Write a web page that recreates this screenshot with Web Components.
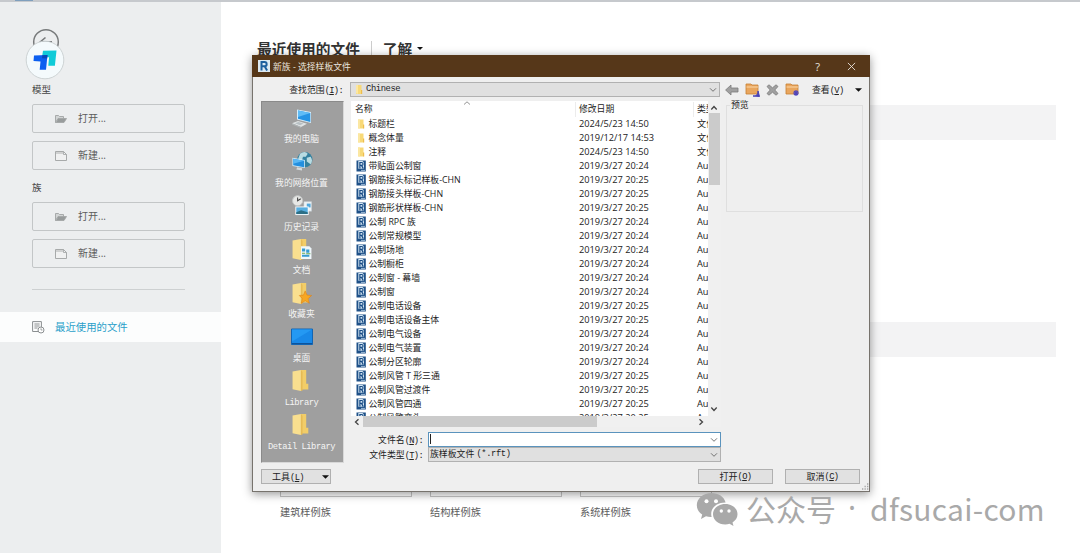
<!DOCTYPE html>
<html lang="zh-CN">
<head>
<meta charset="utf-8">
<title>新族 - 选择样板文件</title>
<style>
  html, body {
    margin: 0;
    height: 553px;
    overflow: hidden;
    background: #fff;
  }

  body {
    font-family: "Open Sans", "Noto Sans CJK SC", sans-serif;
    color: #333;
  }
</style>
</head>
<body>
<revit-home></revit-home>

<script>
const define = (name, html, setup) => {
  const template = document.createElement('template');
  // whitespace between tags would show up under an inherited white-space: pre
  template.innerHTML = html.trim().replace(/>\s+</g, '><');

  window.customElements.define(name, class extends HTMLElement {
    constructor() {
      super();

      const shadowRoot = this.attachShadow({ mode: 'open' });
      shadowRoot.appendChild(template.content.cloneNode(true));
    }

    connectedCallback() {
      if (setup) {
        setup.call(this, this.shadowRoot);
      }
    }
  });
};

const FOLDER = `
  <path d="M1 1.5 9 0v20l-8-1.6z" fill="#f9df8f"/>
  <path d="M9 0h5v13h2v5.5H9z" fill="#f2cd68"/>
  <path d="M9 0 10.5 2v17.500l-1.500 .5z" fill="#e6bb55"/>`;

const ICONS = {
  // sidebar
  open: ['0 0 12 10', `<path d="M.5 8.5v-7h3l1 1h4v2M.5 8.5l2.5-4h8.5L9 8.5z" fill="#d2d5d5" stroke="#a0a4a4" stroke-width=".9"/><path d="M3 5h8L9 8H1.5z" fill="#989c9c"/>`],
  new: ['0 0 12 10', `<path d="M.5.5h8l3 3v6H.5z" fill="#f0f1f1" stroke="#9ea2a2" stroke-width=".9"/><path d="M8.5.5v3h3M1 2h7" fill="none" stroke="#9ea2a2" stroke-width=".8"/>`],
  recent: ['0 0 13 13', `<path d="M8 10.5H.6V.6h8.8v6M2.4 3h5.2M2.4 5h5.2M2.4 7h3.2" fill="none" stroke="#8b8f91"/><circle cx="9" cy="9" r="3" fill="#fff" stroke="#8b8f91"/><path d="M9 7.3V9h1.5" fill="none" stroke="#8b8f91" stroke-width=".8"/>`],

  // places bar
  computer: ['0 0 22 20', `<path d="m6 1 14 2.5v11L6 11z" fill="#d7eefb"/><path d="m7 2 12.3 2.4v9.2L7 10.3z" fill="#2594e5"/><path d="m7 2 12.3 2.4L7 8.5z" fill="#5fbcf6"/><path d="m1 14.8 6-2.3 9 2.7-6 3.3z" fill="#dfe3e4"/><path d="m1 14.8 9 3.7v1L1 16z" fill="#aeb4b6"/><path d="m4 14.8 3.5-1.3 5 1.6-3.4 1.7z" fill="#b7bfc3"/>`],
  network: ['0 0 22 22', `<circle cx="14" cy="9" r="8" fill="#34819f"/><path d="M9 3q5-4 8 0l-2 3-3 0-1 4-4-2zM16 7l4-1q3 4 0 8l-4-3z" fill="#b9dce2"/><path d="m1 7 13 2.3v8.6L1 15.6z" fill="#d7eefb"/><path d="m1.8 8 11.4 2.1v6.8L1.8 14.8z" fill="#238fdf"/><path d="m1.8 8 11.4 2.1-11.4 3.3z" fill="#5ab8f4"/><path d="m6 17 5 1v2.5l-6-1z" fill="#d5dadc"/>`],
  history: ['0 0 22 22', `<path d="M13 7h8v10h-8z" fill="#eef3f5" stroke="#c5d1d7" stroke-width=".5"/><path d="M16 9h4v4h-4z" fill="#52a8dc"/><circle cx="6.4" cy="6" r="5.3" fill="#e7e8e6" stroke="#c2c5c5"/><path d="M6.4 2.6V6l3.300-2" fill="none" stroke="#444" stroke-width="1.1"/><path d="M4 12h14v9H4z" fill="#f6fafb"/><path d="M5 13h12v7H5z" fill="#57aee0"/><path d="m5 18 5-2 7 2v2H5z" fill="#2c6f86"/>`],
  docs: ['0 0 20 20', `${FOLDER}<path d="M9 7h8l2 2v10H9z" fill="#eff7fb"/><path d="M10 9h3v3h-3zM14 10h3v3h-3zM10 15h7v2h-7z" fill="#379bd0"/><path d="M14 14h4M10 13.5h3" stroke="#67a956"/>`],
  favorites: ['0 0 20 20', `${FOLDER}<path d="m13 7.5 1.8 4 4.4.4-3.4 3 1.2 4.4-3.900-2.400-3.900 2.400 1.200-4.400-3-3 4-.4z" fill="#f6a724" stroke="#de7c12" stroke-width=".5"/>`],
  desktop: ['0 0 22 17', `<path d="M.5.5h21v15.500H.5z" fill="#1989e8" stroke="#1265b3"/><path d="M1 1h20L1 13z" fill="#2499f3"/><path d="M1 15h20" stroke="#0d539b"/>`],
  folder: ['0 0 20 20', FOLDER],

  // toolbar above the list
  back: ['0 0 14 12', `<path d="M.6 6 6 1v3h7v4H6v3z" fill="#a0a0a0" stroke="#7c7c7c" stroke-width=".8"/>`],
  up: ['0 0 15 14', `<path d="M1 1h5l1 1h6v9H1z" fill="#e9a65e" stroke="#c78034" stroke-width=".8"/><path d="M1.500 4H13" stroke="#fbd7a6"/><path d="M8 13c4 0 5-2 5-5l1.500 5.500z" fill="#4742b5" stroke="#4742b5"/>`],
  remove: ['0 0 13 12', `<path d="M1 2.500 3 .8l3.500 3L10 .8l2 1.700L8.800 6l3.200 3.500-2 1.700-3.500-3-3.500 3-2-1.700L4.200 6z" fill="#a0a0a0" stroke="#7d7d7d" stroke-width=".8"/>`],
  create: ['0 0 15 14', `<path d="M1 1h5l1 1h6v9H1z" fill="#e9a65e" stroke="#c78034" stroke-width=".8"/><path d="M1.500 4H13" stroke="#fbd7a6"/><path d="M11 7v6M8 10h6M9 8l4 4M13 8l-4 4" stroke="#5045bb" stroke-width="1.2"/>`],

  // rows
  smallfolder: ['0 0 10 11', `<path d="M2 1h5.500v9H2z" fill="#f8d977"/><path d="M2 1h2v9L2 9.300z" fill="#fbe7a2"/><path d="M7 6h1.200v4H7z" fill="#eebd4e"/>`],
  family: ['0 0 11 12', `<path d="M.5.5h9.300v11H.5z" fill="#1f5188"/><path d="M2.300 1h4.200L8 2.600V8.800H2.300z" fill="#d3e5f2"/><path d="M3.900 8.600V2.500h1.700a1.400 1.400 0 0 1 0 2.900H4.200M5.500 5.400l1.800 3.200" fill="none" stroke="#174b85" stroke-width="1.200"/><path d="M5 10.400H9" stroke="#bdd7eb" stroke-width=".8"/>`],
  revit: ['0 0 12 12', `<path d="M0 0h12v12H0z" fill="#dce9f2"/><path d="M3.500 10.500V2h3a2 2 0 0 1 0 4.300h-3M6.500 6l2.600 4.500" fill="none" stroke="#1d5f9e" stroke-width="2"/>`],

  // arrows
  chevdown: ['0 0 8 6', `<path d="m1 1.300 3 3 3-3" fill="none" stroke="#666" stroke-width=".9"/>`],
  scrollup: ['0 0 8 6', `<path d="m1.300 4.500 2.700-3 2.700 3" fill="none" stroke="#444" stroke-width="1.300"/>`],
  scrolldown: ['0 0 8 6', `<path d="m1.300 1.500 2.700 3 2.700-3" fill="none" stroke="#444" stroke-width="1.300"/>`],
  scrollleft: ['0 0 6 8', `<path d="m4.500 1.300-3 2.700 3 2.700" fill="none" stroke="#444" stroke-width="1.300"/>`],
  scrollright: ['0 0 6 8', `<path d="m1.500 1.300 3 2.700-3 2.700" fill="none" stroke="#444" stroke-width="1.300"/>`],
  sort: ['0 0 8 4', `<path d="m1 3.500 3-2.700 3 2.700" fill="none" stroke="#777" stroke-width=".8"/>`],
  triangle: ['0 0 8 4', `<path d="M0 0h8L4 4z" fill="#111"/>`],
  close: ['0 0 10 10', `<path d="m1 1 8 8M9 1 1 9" stroke="#e9e3dd" stroke-width="1"/>`],
  grip: ['0 0 8 8', `<path d="M6 1h1.300M3.500 3.500h1.300M6 3.500h1.300M1 6h1.300M3.500 6h1.300M6 6h1.300" stroke="#a5a5a5" stroke-width="1.300"/>`],
  goback: ['0 0 28 28', `<circle cx="14" cy="14" r="12.300" fill="none" stroke="#777a7b" stroke-width="1.500"/><path d="m13.500 9.500-5 4.200 5 4.200M9 13.700h11" fill="none" stroke="#777a7b" stroke-width="1.600"/>`],
  badge: ['0 0 40 40', `<circle cx="20" cy="20" r="18.800" fill="#f4fafc" stroke="#c4cacc" stroke-width=".8"/><path d="m18 10.800 13.500-.4-1.600 15.400h-6.600l.8-8.600H17z" fill="#10cbd8"/><path d="m9 15.500 13.500-.4L21 29.800h-6.300l.8-8.400-7-.3z" fill="#0b5ff0"/><path d="m17.300 15.200 5.200-.1-.4 3.400-5-.2z" fill="#0749b7"/>`],
  wechat: ['0 0 42 34', `<path d="M15.500 1C7.200 1 .8 6.500 .8 13.200c0 3.900 2.100 7.200 5.400 9.400L5 27l5-2.700c1.800.5 3.500.8 5.600.7-2.100-8.200 4.500-14.700 14-14.500C28.200 4.800 22.400 1 15.500 1z" fill="#a9a9a9"/><path d="M29.300 12c-7 0-12.300 4.600-12.300 10.200S22.300 32.400 29.300 32.400c1.500 0 2.900-.2 4.200-.6l4 2.100-1-3.500c3-1.900 5-4.800 5-8.200C41.500 16.600 36.300 12 29.300 12z" fill="#a9a9a9"/><g fill="#fff"><circle cx="10.500" cy="9.300" r="2"/><circle cx="20" cy="9.300" r="2"/><circle cx="25.300" cy="19" r="1.700"/><circle cx="33" cy="19" r="1.700"/></g>`],
};

define('ui-icon', `
  <style>
    :host {
      display: block;
      flex: none;
    }

    svg {
      display: block;
      width: 100%;
      height: 100%;
    }
  </style>
`, function (root) {
  const [box, body] = ICONS[this.getAttribute('name')];
  root.innerHTML += `<svg viewBox="${box}">${body}</svg>`;
  this.style.width = `${this.getAttribute('w')}px`;
  this.style.height = `${this.getAttribute('h')}px`;
});

// half-width run used by the classic dialog font
define('mono-run', `
  <style>
    :host {
      font-family: "Liberation Mono", monospace;
      font-size: 8.800px;
      letter-spacing: var(--mono-spacing, -.7px);
    }
  </style>
  <slot></slot>
`);

define('side-button', `
  <style>
    :host {
      box-sizing: border-box;
      display: flex;
      align-items: center;
      gap: 11px;
      height: 29px;
      padding-left: 22px;
      border: 1px solid #c3c6c7;
      border-radius: 2px;
      font-size: 10px;
      color: #5c5c5c;
    }

    span {
      margin-top: -2px;
    }
  </style>
  <slot name="icon"></slot>
  <span><slot></slot></span>
`);

define('start-sidebar', `
  <style>
    :host {
      display: block;
      width: 221px;
      height: 100%;
      background: #eceeef;
    }

    .logo {
      height: 80px;
      box-sizing: border-box;
      padding: 26px 0 0 32px;
    }

    .badge {
      margin: -16px 0 0 -7px;
    }

    .group {
      padding: 0 36px 0 32px;
      display: flex;
      flex-direction: column;
      gap: 8px;
    }

    .label {
      height: 16px;
      margin-bottom: -2px;
      line-height: 15px;
      font-size: 9.500px;
      color: #444;
    }

    .second {
      margin-top: 10px;
    }

    hr {
      width: 153px;
      margin: 21px 0 22px 32px;
      border: 0;
      border-top: 1px solid #cdd0d1;
    }

    .recent {
      display: flex;
      align-items: center;
      gap: 10px;
      height: 30px;
      padding-left: 32px;
      background: #fcfdfd;
      font-size: 10.400px;
      color: #2a9fc9;
    }

    .recent span {
      margin-top: -1px;
    }
  </style>
  <div class="logo">
    <ui-icon name="goback" w="28" h="28"></ui-icon>
    <div class="badge"><ui-icon name="badge" w="40" h="40"></ui-icon></div>
  </div>
  <div class="group">
    <div class="label">模型</div>
    <side-button><ui-icon slot="icon" name="open" w="12" h="10"></ui-icon>打开...</side-button>
    <side-button><ui-icon slot="icon" name="new" w="12" h="10"></ui-icon>新建...</side-button>
  </div>
  <div class="group second">
    <div class="label">族</div>
    <side-button><ui-icon slot="icon" name="open" w="12" h="10"></ui-icon>打开...</side-button>
    <side-button><ui-icon slot="icon" name="new" w="12" h="10"></ui-icon>新建...</side-button>
  </div>
  <hr>
  <div class="recent"><ui-icon name="recent" w="13" h="13"></ui-icon><span>最近使用的文件</span></div>
`);

define('recent-page', `
  <style>
    :host {
      display: flex;
      flex-direction: column;
      flex: 1;
      height: 100%;
      padding: 0 24px 0 36px;
      box-sizing: border-box;
    }

    header {
      display: flex;
      align-items: center;
      height: 27px;
      margin-top: 33px;
      font-size: 14.700px;
      font-weight: bold;
      color: #333;
    }

    .learn {
      display: flex;
      align-items: center;
      gap: 5px;
      margin-left: 12px;
      padding-left: 11px;
    }

    .learn::before {
      content: "";
      width: 1px;
      height: 15px;
      margin-left: -12px;
      margin-right: 6px;
      background: #ccc;
    }

    .band {
      height: 35px;
      background: #f3f3f4;
    }

    .first {
      margin-top: 43px;
    }

    .next {
      margin-top: 182px;
    }

    .tiles {
      display: flex;
      gap: 18px;
      margin: 26px 0 0 23px;
      font-size: 10.200px;
      color: #5c5c5c;
    }

    .tile {
      width: 132px;
    }

    .thumb {
      height: 114px;
      box-sizing: border-box;
      border: 1px solid #c6c6c6;
      margin-bottom: 7px;
    }
  </style>
  <header>
    <span>最近使用的文件</span>
    <span class="learn">了解 <ui-icon name="triangle" w="6" h="3"></ui-icon></span>
  </header>
  <div class="band first"></div>
  <div class="band next"></div>
  <div class="tiles">
    <div class="tile"><div class="thumb"></div>建筑样例族</div>
    <div class="tile"><div class="thumb"></div>结构样例族</div>
    <div class="tile"><div class="thumb"></div>系统样例族</div>
  </div>
`);

define('combo-box', `
  <style>
    :host {
      box-sizing: border-box;
      display: flex;
      align-items: center;
      justify-content: space-between;
      height: 15px;
      padding: 0 2px 0 3px;
      border: 1px solid #b1b1b1;
      background: #e0e0e0;
      font-size: 8.900px;
      color: #222;
    }

    :host([editable]) {
      border-color: #5a93bd;
      background: #fff;
    }

    span {
      display: flex;
      align-items: center;
      gap: 2px;
      margin-top: -1px;
      white-space: nowrap;
      line-height: 12px;
    }
  </style>
  <span><slot></slot></span>
  <ui-icon name="chevdown" w="8" h="6"></ui-icon>
`);

define('push-button', `
  <style>
    :host {
      box-sizing: border-box;
      display: flex;
      align-items: center;
      justify-content: center;
      width: 75px;
      height: 15px;
      border: 1px solid #b0b0b0;
      background: #e1e1e1;
      font-size: 9px;
      color: #222;
      white-space: nowrap;
    }
  </style>
  <slot></slot>
`);

define('place-item', `
  <style>
    :host {
      --mono-spacing: -.48px;
      display: flex;
      flex-direction: column;
      align-items: center;
      height: 43.800px;
      font-size: 8.800px;
      color: #f4f4f4;
    }

    .pic {
      display: flex;
      align-items: center;
      height: 24px;
    }

    .name {
      height: 18px;
      margin-left: -1px;
      line-height: 19px;
      white-space: nowrap;
    }
  </style>
  <div class="pic"></div>
  <div class="name"><slot></slot></div>
`, function (root) {
  const icon = this.getAttribute('icon');
  const height = icon === 'desktop' ? 18 : 21;
  root.querySelector('.pic').innerHTML = `<ui-icon name="${icon}" w="22" h="${height}"></ui-icon>`;
});

define('file-list', `
  <style>
    :host {
      display: grid;
      grid-template-columns: 357px 12px;
      grid-template-rows: 315px 11px;
      height: 326px;
      background: #f0f0f0;
      font-size: 9.250px;
      color: #222;
    }

    .view {
      overflow: hidden;
      background: #fff;
    }

    .row, .head {
      display: grid;
      grid-template-columns: 13.400px 210.600px 118px 80px;
      align-items: center;
      width: 422px;
      height: 14px;
      padding-left: 4px;
      line-height: 14px;
      white-space: nowrap;
    }

    .row ui-icon {
      margin-left: 1px;
    }

    .row > :nth-child(2) {
      font-size: 8.850px;
    }

    .head {
      grid-template-columns: 108px 112px 118px 80px;
      height: 16px;
      font-size: 8.800px;
    }

    .head ui-icon {
      align-self: start;
    }

    .date, .type {
      height: 15px;
      padding-left: 3px;
      border-left: 1px solid #ececec;
      line-height: 15px;
    }

    .vbar {
      display: flex;
      flex-direction: column;
      justify-content: space-between;
      align-items: center;
      padding: 4px 0;
      box-sizing: border-box;
    }

    .vbar i {
      width: 11px;
      height: 72px;
      margin: 2px 0 auto;
      background: #cbcbcb;
    }

    .hbar {
      display: flex;
      align-items: center;
      padding: 0 4px 0 3px;
    }

    .hbar i {
      width: 234px;
      height: 11px;
      margin: 0 auto 0 3px;
      background: #cbcbcb;
    }
  </style>
  <div class="view">
    <div class="head"><span>名称</span><ui-icon name="sort" w="8" h="4"></ui-icon><span class="date">修改日期</span><span class="type">类型</span></div>
    <div class="rows"></div>
  </div>
  <div class="vbar">
    <ui-icon name="scrollup" w="8" h="6"></ui-icon><i></i><ui-icon name="scrolldown" w="8" h="6"></ui-icon>
  </div>
  <div class="hbar">
    <ui-icon name="scrollleft" w="6" h="8"></ui-icon><i></i><ui-icon name="scrollright" w="6" h="8"></ui-icon>
  </div>
`, function (root) {
  const files = [
    ['标题栏', '2024/5/23 14:50', true],
    ['概念体量', '2019/12/17 14:53', true],
    ['注释', '2024/5/23 14:50', true],
    ['带贴面公制窗', '2019/3/27 20:24'],
    ['钢筋接头标记样板-CHN', '2019/3/27 20:25'],
    ['钢筋接头样板-CHN', '2019/3/27 20:25'],
    ['钢筋形状样板-CHN', '2019/3/27 20:25'],
    ['公制 RPC 族', '2019/3/27 20:24'],
    ['公制常规模型', '2019/3/27 20:24'],
    ['公制场地', '2019/3/27 20:24'],
    ['公制橱柜', '2019/3/27 20:24'],
    ['公制窗 - 幕墙', '2019/3/27 20:24'],
    ['公制窗', '2019/3/27 20:24'],
    ['公制电话设备', '2019/3/27 20:25'],
    ['公制电话设备主体', '2019/3/27 20:25'],
    ['公制电气设备', '2019/3/27 20:24'],
    ['公制电气装置', '2019/3/27 20:24'],
    ['公制分区轮廓', '2019/3/27 20:24'],
    ['公制风管 T 形三通', '2019/3/27 20:25'],
    ['公制风管过渡件', '2019/3/27 20:25'],
    ['公制风管四通', '2019/3/27 20:25'],
    ['公制风管弯头', '2019/3/27 20:25'],
  ];

  root.querySelector('.rows').innerHTML = files.map(([name, date, folder]) => `
    <div class="row">
      <ui-icon name="${folder ? 'smallfolder' : 'family'}" w="${folder ? 10 : 11}" h="12"></ui-icon>
      <span>${name}</span>
      <span>${date}</span>
      <span>${folder ? '文件夹' : 'Autodesk'}</span>
    </div>
  `).join('');
});

define('template-dialog', `
  <style>
    :host {
      position: absolute;
      left: 252px;
      top: 55px;
      box-sizing: border-box;
      display: flex;
      flex-direction: column;
      width: 618px;
      height: 437px;
      border: 1px solid #77736d;
      border-top: 0;
      background: #efefef;
      box-shadow: 0 2px 9px rgba(0, 0, 0, .42);
      color: #222;
      font-size: 8.900px;
      white-space: nowrap;
    }

    .title {
      display: flex;
      flex: none;
      align-items: center;
      height: 22px;
      margin: 0 -1px;
      padding: 0 14px 0 6px;
      background: #563719;
      color: #e9e3dd;
      font-size: 8.800px;
    }

    .title span {
      margin: 0 auto 0 3px;
    }

    .title b {
      margin-right: 27px;
      font-size: 11px;
      font-weight: normal;
    }

    .look {
      display: flex;
      flex: none;
      align-items: center;
      height: 15px;
      margin: 5px 0 4px;
    }

    .look label {
      width: 90px;
      margin-right: 7px;
      text-align: right;
    }

    .look combo-box {
      width: 370px;
    }

    .tools {
      display: flex;
      align-items: center;
      gap: 6px;
      margin-left: 5px;
    }

    .tools span {
      margin: 0 5px 0 6px;
    }

    .body {
      display: flex;
      flex: none;
      height: 362px;
      padding-left: 8px;
    }

    .places {
      box-sizing: border-box;
      width: 83px;
      height: 362px;
      padding: 4px 1px 0 0;
      border: 1px solid #8a8a8a;
      border-right-color: #d8d8d8;
      border-bottom-color: #d8d8d8;
      background: #9f9f9f;
    }

    .center {
      width: 370px;
      margin: 0 5px 0 7px;
    }

    .field {
      display: flex;
      align-items: center;
    }

    .field label {
      width: 72px;
      margin-right: 5px;
      text-align: right;
    }

    .field combo-box {
      flex: 1;
      padding-left: 1px;
    }

    .name {
      margin: 5px 0 0;
    }

    fieldset {
      box-sizing: border-box;
      width: 137px;
      height: 111px;
      margin: 0;
      padding: 0 3px;
      border: 1px solid #dfdfdf;
    }

    legend {
      height: 9px;
      padding: 0 1px;
      line-height: 8px;
    }

    .caret {
      width: 1px;
      height: 10px;
      background: #222;
    }

    .foot {
      display: flex;
      flex: none;
      align-items: center;
      margin-top: 6px;
      padding-left: 8px;
    }

    .foot .tool {
      width: 70px;
      gap: 18px;
      margin-right: auto;
      padding-left: 9px;
    }

    .foot push-button:last-of-type {
      margin: 0 9px 0 12px;
    }

    .grip {
      display: flex;
      justify-content: flex-end;
      margin-top: -1px;
    }
  </style>
  <div class="title">
    <ui-icon name="revit" w="12" h="12"></ui-icon>
    <span>新族 - 选择样板文件</span>
    <b>?</b>
    <ui-icon name="close" w="9" h="9"></ui-icon>
  </div>
  <div class="look">
    <label>查找范围<mono-run>(<u>I</u>):</mono-run></label>
    <combo-box style="--mono-spacing: -.4px"><ui-icon name="smallfolder" w="10" h="11"></ui-icon><mono-run>Chinese</mono-run></combo-box>
    <div class="tools">
      <ui-icon name="back" w="14" h="12"></ui-icon>
      <ui-icon name="up" w="15" h="14"></ui-icon>
      <ui-icon name="remove" w="13" h="12"></ui-icon>
      <ui-icon name="create" w="15" h="14"></ui-icon>
      <span>查看<mono-run>(<u>V</u>)</mono-run></span>
      <ui-icon name="triangle" w="7" h="4"></ui-icon>
    </div>
  </div>
  <div class="body">
    <div class="places">
      <place-item icon="computer">我的电脑</place-item>
      <place-item icon="network">我的网络位置</place-item>
      <place-item icon="history">历史记录</place-item>
      <place-item icon="docs">文档</place-item>
      <place-item icon="favorites">收藏夹</place-item>
      <place-item icon="desktop">桌面</place-item>
      <place-item icon="folder"><mono-run>Library</mono-run></place-item>
      <place-item icon="folder"><mono-run>Detail Library</mono-run></place-item>
    </div>
    <div class="center">
      <file-list></file-list>
      <div class="field name">
        <label>文件名<mono-run>(<u>N</u>):</mono-run></label>
        <combo-box editable><div class="caret"></div></combo-box>
      </div>
      <div class="field">
        <label>文件类型<mono-run>(<u>T</u>):</mono-run></label>
        <combo-box style="--mono-spacing: -.4px">族样板文件<mono-run>(*.rft)</mono-run></combo-box>
      </div>
    </div>
    <fieldset><legend>预览</legend></fieldset>
  </div>
  <div class="foot">
    <push-button class="tool"><div>工具<mono-run>(<u>L</u>)</mono-run></div><ui-icon name="triangle" w="7" h="4"></ui-icon></push-button>
    <push-button>打开<mono-run>(<u>O</u>)</mono-run></push-button>
    <push-button>取消<mono-run>(<u>C</u>)</mono-run></push-button>
  </div>
  <div class="grip"><ui-icon name="grip" w="8" h="8"></ui-icon></div>
`);

define('account-mark', `
  <style>
    :host {
      position: absolute;
      left: 696px;
      top: 491px;
      display: flex;
      align-items: center;
      height: 35px;
      font-family: "Noto Sans CJK SC", sans-serif;
      font-size: 30px;
      color: #a9a9a9;
      white-space: nowrap;
    }

    span {
      margin: -2px 0 0 8px;
    }

    .dot {
      margin-left: 12px;
      font-family: "Noto Sans", sans-serif;
    }

    .id {
      margin-left: 14px;
      letter-spacing: .3px;
    }
  </style>
  <ui-icon name="wechat" w="42" h="34"></ui-icon>
  <span>公众号</span><span class="dot">·</span><span class="id">dfsucai-com</span>
`);

define('revit-home', `
  <style>
    :host {
      position: relative;
      display: flex;
      flex-direction: column;
      width: 1080px;
      height: 553px;
      overflow: hidden;
    }

    .strip {
      height: 2px;
      padding-left: 15px;
      background: #c6c9cd;
    }

    .strip i {
      display: block;
      width: 18px;
      height: 1px;
      background: #7f9fbd;
    }

    main {
      display: flex;
      flex: 1;
    }
  </style>
  <div class="strip"><i></i></div>
  <main>
    <start-sidebar></start-sidebar>
    <recent-page></recent-page>
  </main>
  <template-dialog></template-dialog>
  <account-mark></account-mark>
`);
</script>
</body>
</html>
